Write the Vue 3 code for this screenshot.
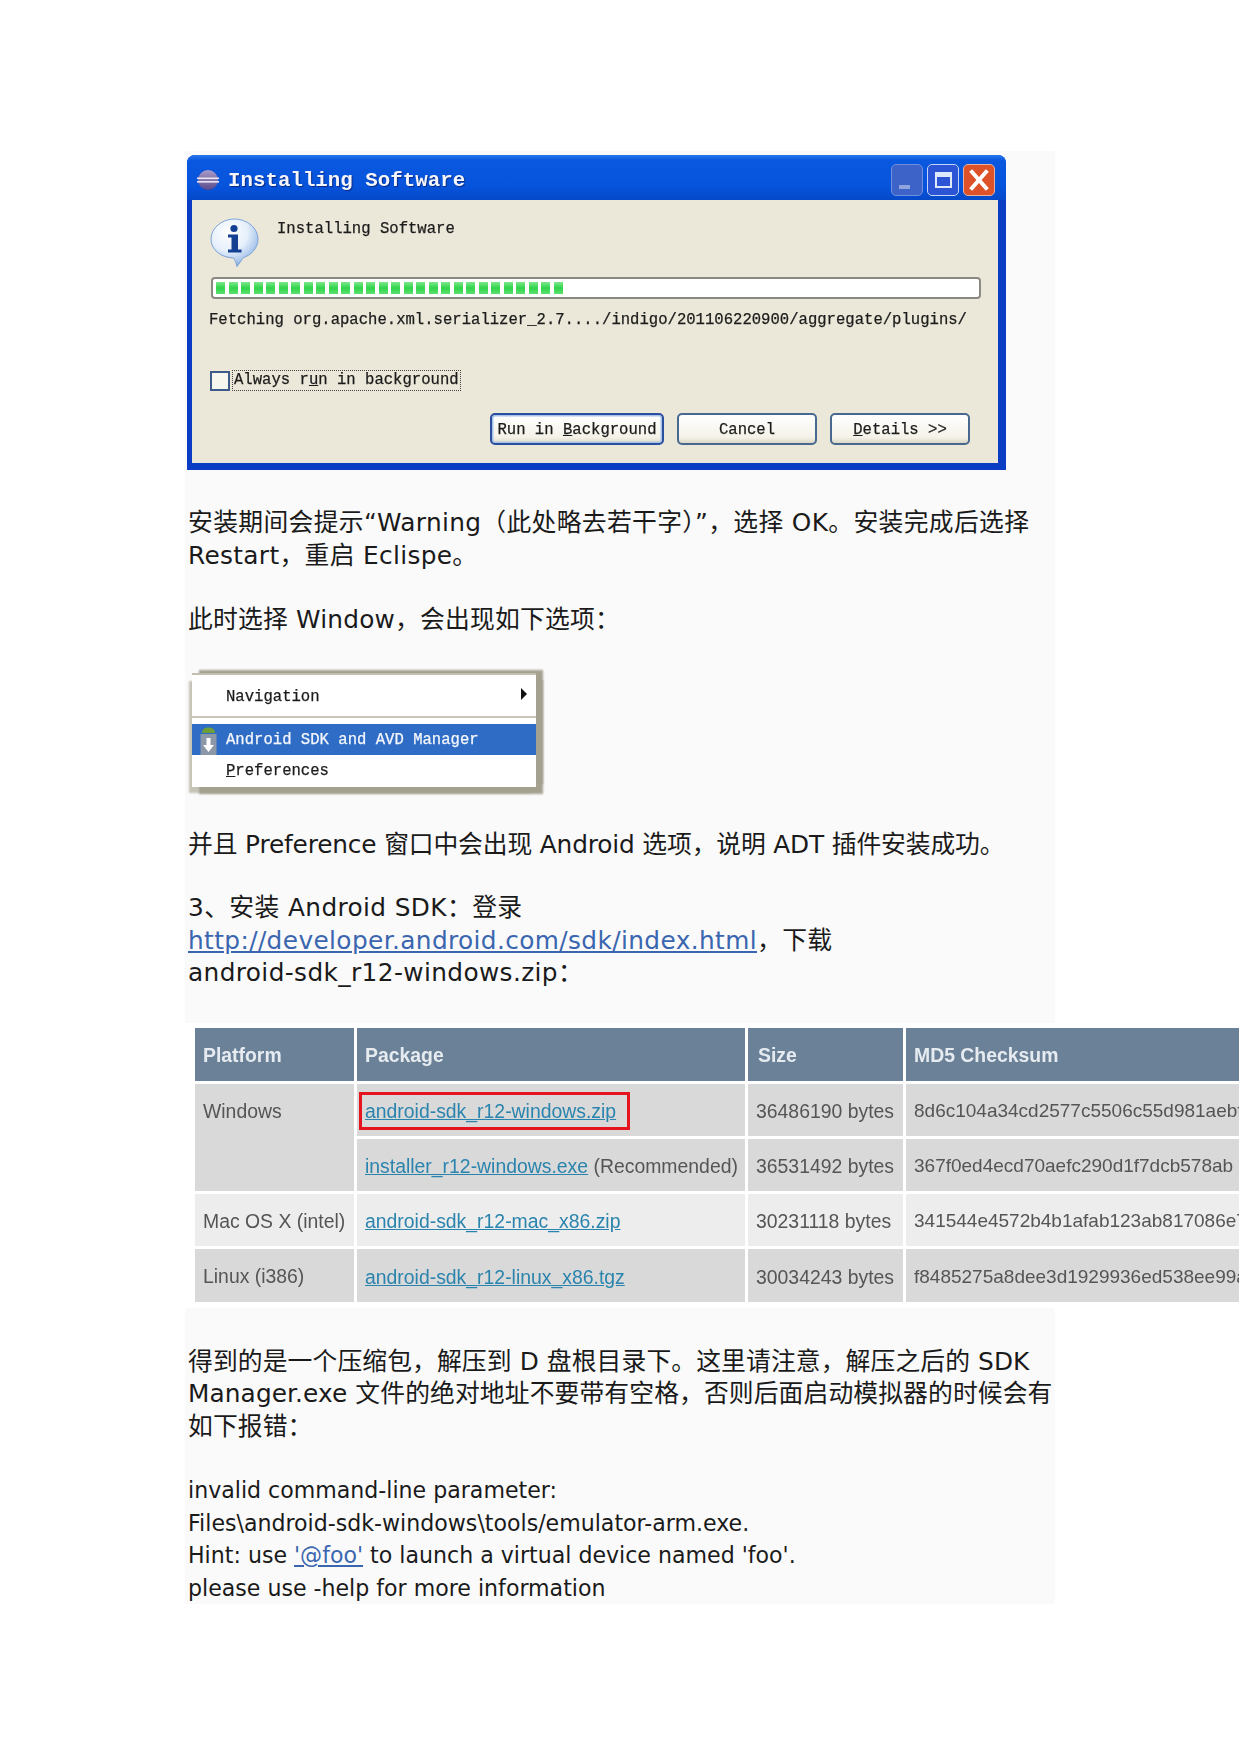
<script setup>
const segments = Array.from({ length: 28 }, (_, i) => i)
const rows = [
  { platform: 'Windows', span: 2, link: 'android-sdk_r12-windows.zip', size: '36486190 bytes', md5: '8d6c104a34cd2577c5506c55d981aebf', boxed: true, tone: 'dark' },
  { link: 'installer_r12-windows.exe', note: ' (Recommended)', size: '36531492 bytes', md5: '367f0ed4ecd70aefc290d1f7dcb578ab', tone: 'dark' },
  { platform: 'Mac OS X (intel)', span: 1, link: 'android-sdk_r12-mac_x86.zip', size: '30231118 bytes', md5: '341544e4572b4b1afab123ab817086e7', tone: 'light' },
  { platform: 'Linux (i386)', span: 1, link: 'android-sdk_r12-linux_x86.tgz', size: '30034243 bytes', md5: 'f8485275a8dee3d1929936ed538ee99a', tone: 'dark' }
]
</script>

<template>
  <div class="page">
    <main class="doc">
      <section class="dialog">
        <header class="titlebar">
          <svg class="eclipse" viewBox="0 0 22 20" width="22" height="20">
            <defs>
              <linearGradient id="ecl" x1="0" y1="0" x2="0" y2="1">
                <stop offset="0" stop-color="#a99bc8" />
                <stop offset="1" stop-color="#5b4a8c" />
              </linearGradient>
            </defs>
            <circle cx="11" cy="10" r="10" fill="url(#ecl)" />
            <rect x="0" y="7.5" width="22" height="1.6" fill="#e8e6f2" />
            <rect x="0" y="11" width="22" height="1.6" fill="#e8e6f2" />
          </svg>
          <span class="title">Installing Software</span>
          <div class="winbtns">
            <div class="winbtn min"><i class="dash"></i></div>
            <div class="winbtn max"><i class="frame"></i></div>
            <div class="winbtn close">
              <svg viewBox="0 0 30 30" width="30" height="30">
                <path d="M8 7 L22 23 M22 7 L8 23" stroke="#fff" stroke-width="4" stroke-linecap="square" fill="none" />
              </svg>
            </div>
          </div>
        </header>
        <div class="client">
          <div class="head">
            <svg class="info" viewBox="0 0 49 49" width="49" height="49">
              <defs>
                <radialGradient id="bub" cx="0.38" cy="0.28" r="0.8">
                  <stop offset="0" stop-color="#ffffff" />
                  <stop offset="0.5" stop-color="#e6effb" />
                  <stop offset="0.8" stop-color="#a9c6ec" />
                  <stop offset="1" stop-color="#4f82c8" />
                </radialGradient>
              </defs>
              <path d="M24.5 1 C37 1 48 10 48 21 C48 31 40 37.5 33.5 39.5 C31.5 42 29 46 27 48.5 C26 44.5 25 42 23.5 40 C11 39.5 1 32 1 21 C1 10 12 1 24.5 1 Z" fill="url(#bub)" stroke="#7ea3d8" stroke-width="1" />
              <circle cx="24" cy="10.5" r="3.6" fill="#133f92" />
              <path d="M18 16.5 H28 V31.5 H31.5 V34.5 H18 V31.5 H21.5 V19.5 H18 Z" fill="#133f92" />
            </svg>
            <span class="mono heading">Installing Software</span>
          </div>
          <div class="progress">
            <i v-for="s in segments" :key="s" class="seg"></i>
          </div>
          <div class="mono fetch">Fetching org.apache.xml.serializer_2.7..../indigo/201106220900/aggregate/plugins/</div>
          <div class="check">
            <span class="box"></span>
            <span class="mono label">Always r<u>u</u>n in background</span>
          </div>
          <div class="buttons">
            <button class="mono btn primary">Run in <u>B</u>ackground</button>
            <button class="mono btn">Cancel</button>
            <button class="mono btn"><u>D</u>etails &gt;&gt;</button>
          </div>
        </div>
      </section>

      <p class="p1">安装期间会提示“Warning（此处略去若干字）”，选择 OK。安装完成后选择<br />Restart，重启 Eclispe。</p>
      <p class="p2">此时选择 Window，会出现如下选项：</p>

      <section class="menu">
        <div class="panel">
          <div class="mono mrow nav">Navigation<i class="arrow"></i></div>
          <div class="sep"></div>
          <div class="mono mrow active">
            <svg class="droid" viewBox="0 0 17 28" width="17" height="28">
              <path d="M2 6 C2 2 5 0.5 8.5 0.5 C12 0.5 15 2 15 6 Z" fill="#6f9e3a" />
              <rect x="0.5" y="7" width="16" height="21" fill="#8c98a8" />
              <path d="M6.5 11 H10.5 V18 H14 L8.5 25 L3 18 H6.5 Z" fill="#fff" />
            </svg>
            Android SDK and AVD Manager
          </div>
          <div class="mono mrow pref"><u>P</u>references</div>
        </div>
      </section>

      <p class="p3">并且 Preference 窗口中会出现 Android 选项，说明 ADT 插件安装成功。</p>
      <p class="p4">3、安装 Android SDK：登录<br /><a class="url">http://developer.android.com/sdk/index.html</a>，下载<br />android-sdk_r12-windows.zip：</p>

      <section class="tablewrap">
        <table class="sdk">
          <colgroup>
            <col class="c1" /><col class="c2" /><col class="c3" /><col class="c4" />
          </colgroup>
          <thead>
            <tr>
              <th>Platform</th><th>Package</th><th class="sizeh">Size</th><th>MD5 Checksum</th>
            </tr>
          </thead>
          <tbody>
            <tr v-for="r in rows" :key="r.link" :class="r.tone">
              <td v-if="r.platform" :rowspan="r.span" class="plat">{{ r.platform }}</td>
              <td class="pkg">
                <span :class="{ boxed: r.boxed }"><a class="dl">{{ r.link }}</a></span>{{ r.note }}
              </td>
              <td class="size">{{ r.size }}</td>
              <td class="md5">{{ r.md5 }}</td>
            </tr>
          </tbody>
        </table>
      </section>

      <p class="p5">得到的是一个压缩包，解压到 D 盘根目录下。这里请注意，解压之后的 SDK<br />Manager.exe 文件的绝对地址不要带有空格，否则后面启动模拟器的时候会有<br />如下报错：</p>
      <p class="p6">invalid command-line parameter:<br />Files\android-sdk-windows\tools/emulator-arm.exe.<br />Hint: use <a class="url">'@foo'</a> to launch a virtual device named 'foo'.<br />please use -help for more information</p>
    </main>
  </div>
</template>

<style scoped>
.page {
  width: 1241px;
  height: 1754px;
  padding-top: 151px;
  padding-left: 185px;
  box-sizing: border-box;
  background: #fff;
  overflow: hidden;
}
.doc {
  width: 870px;
  height: 1453px;
  padding-top: 4px;
  box-sizing: border-box;
  background: #fafafa;
  color: #1a1a1a;
  font-family: "DejaVu Sans", "Noto Sans CJK SC", sans-serif;
  font-size: 24.8px;
  letter-spacing: 0.2px;
  line-height: 32.5px;
}
p {
  margin: 0;
  padding-left: 3px;
  white-space: nowrap;
}
.p1 { margin-top: 37px; letter-spacing: 0.33px; }
.p2 { margin-top: 32px; }
.p3 { margin-top: 36px; letter-spacing: -0.15px; }
.p4 { margin-top: 31px; letter-spacing: 0.38px; }
.p5 { margin-top: 38px; letter-spacing: 0.1px; }
.p6 {
  margin-top: 31px;
  font-size: 22.1px;
  letter-spacing: 0;
}
.url {
  color: #3a66b0;
  text-decoration: underline;
}
.mono {
  font-family: "Liberation Mono", "DejaVu Sans Mono", monospace;
  font-size: 15.6px;
  letter-spacing: 0;
  color: #1c1c1c;
  -webkit-text-stroke: 0.25px #1c1c1c;
}

/* dialog */
.dialog {
  width: 819px;
  height: 315px;
  margin-left: 2px;
  display: flex;
  flex-direction: column;
  background: #0a3cc4;
  border-radius: 8px 8px 0 0;
  filter: blur(0.35px);
}
.titlebar {
  height: 45px;
  flex: none;
  box-sizing: border-box;
  display: flex;
  align-items: center;
  padding: 4px 0 0 10px;
  border-radius: 8px 8px 0 0;
  background: linear-gradient(#2a78ea 0, #0a58e0 12%, #0653dc 70%, #0549c8 100%);
}
.eclipse {
  flex: none;
}
.title {
  margin-left: 9px;
  padding-top: 2px;
  font-family: "Liberation Mono", monospace;
  font-weight: 700;
  font-size: 20.8px;
  letter-spacing: 0;
  line-height: 28px;
  color: #f4f6fb;
  text-shadow: 1px 1px 1px #0a2a80;
}
.winbtns {
  margin-left: auto;
  margin-right: 11px;
  display: flex;
  gap: 4px;
}
.winbtn {
  width: 32px;
  height: 32px;
  box-sizing: border-box;
  border: 1.5px solid #9db7ee;
  border-radius: 5px;
  position: relative;
  display: flex;
  align-items: center;
  justify-content: center;
}
.winbtn.min {
  background: #3d63c8;
  border-color: #6f8fdc;
}
.dash {
  position: absolute;
  left: 7px;
  bottom: 6px;
  width: 11px;
  height: 4px;
  background: #8fa4dc;
}
.winbtn.max {
  background: #2b55d4;
  border-color: #c4d4f6;
}
.frame {
  width: 17px;
  height: 16px;
  box-sizing: border-box;
  border: 2px solid #dfe8fb;
  border-top-width: 5px;
}
.winbtn.close {
  background: #dd5228;
  border-color: #e7b3a0;
}
.client {
  flex: 1;
  margin: 0 8px 7px 5px;
  padding: 18px 0 0 19px;
  background: #ebe8d9;
  box-sizing: border-box;
}
.head {
  display: flex;
  height: 49px;
}
.info {
  flex: none;
  margin-left: -1px;
}
.heading {
  margin-left: 18px;
  padding-top: 1px;
  line-height: 20px;
}
.progress {
  width: 770px;
  height: 22px;
  margin-top: 10px;
  box-sizing: border-box;
  border: 2px solid #8b8a80;
  border-radius: 4px;
  background: #fff;
  padding: 3px 3px;
  display: flex;
  gap: 3.5px;
}
.seg {
  width: 9px;
  flex: none;
  background: linear-gradient(#7fe88e, #2fd44a 50%, #5ee070);
}
.fetch {
  margin-top: 11px;
  line-height: 20px;
  margin-left: -2px;
  white-space: nowrap;
}
.check {
  margin-top: 40px;
  height: 21px;
  display: flex;
  align-items: center;
}
.box {
  width: 20px;
  height: 20px;
  margin-left: -1px;
  box-sizing: border-box;
  border: 2px solid #3d5a8a;
  background: #f6f5ee;
}
.label {
  margin-left: 2px;
  padding: 0 1px;
  line-height: 19px;
  border: 1px dotted #444;
}
.buttons {
  margin-top: 22px;
  padding-right: 28px;
  display: flex;
  justify-content: flex-end;
  gap: 13px;
}
.btn {
  width: 140px;
  height: 32px;
  padding: 2px 0 0;
  box-sizing: border-box;
  border: 2px solid #47688f;
  border-radius: 5px;
  background: linear-gradient(#fff, #f4f2e8 80%, #dcd8c6);
  text-align: center;
}
.btn.primary {
  width: 174px;
  border-color: #2a4f9e;
  box-shadow: inset 0 0 0 1.5px #a9c4ea;
}

/* menu */
.menu {
  width: 357px;
  height: 124px;
  margin: 32px 0 0 3px;
  padding: 4px 0 0 4px;
  box-sizing: border-box;
  filter: blur(0.35px);
}
.panel {
  width: 344px;
  height: 112px;
  background: #fff;
  border-top: 2px solid #c2bfb0;
  box-shadow: 7px 7px 2px #a4a191, 7px -3px 2px #a4a191, -4px 7px 2px -1px #c5c3b6;
}
.mrow {
  display: flex;
  align-items: center;
  padding-left: 34px;
  position: relative;
}
.nav {
  height: 41px;
  padding-top: 4px;
  box-sizing: border-box;
}
.arrow {
  position: absolute;
  left: 329px;
  top: 13px;
  width: 0;
  height: 0;
  border-left: 6px solid #111;
  border-top: 6px solid transparent;
  border-bottom: 6px solid transparent;
}
.sep {
  height: 2px;
  margin-bottom: 6px;
  background: #c9c6b8;
}
.active {
  height: 31px;
  padding-top: 3px;
  box-sizing: border-box;
  background: #2f6cc5;
  color: #f4f7fc;
  -webkit-text-stroke: 0.25px #f4f7fc;
}
.droid {
  position: absolute;
  left: 8px;
  top: 3px;
}
.pref {
  height: 31px;
  padding-top: 3px;
  box-sizing: border-box;
}

/* table */
.tablewrap {
  width: 1054px;
  height: 285px;
  margin: 33px 0 0 0;
  padding: 2px 0 0 7px;
  box-sizing: border-box;
  background: #fff;
  overflow: hidden;
  filter: blur(0.3px);
}
.sdk {
  width: 1051px;
  table-layout: fixed;
  border-collapse: separate;
  border-spacing: 3px;
  font-family: "Liberation Sans", Arial, sans-serif;
  font-size: 19.4px;
  letter-spacing: 0;
  line-height: 24px;
  color: #555;
}
.c1 { width: 159px; }
.c2 { width: 388px; }
.c3 { width: 155px; }
.c4 { width: 334px; }
th {
  height: 53px;
  padding: 2px 8px 0;
  box-sizing: border-box;
  background: #6b8198;
  color: #e6ebf0;
  font-weight: 700;
  text-align: left;
  white-space: nowrap;
  overflow: hidden;
}
th.sizeh {
  padding-left: 10px;
}
td {
  height: 52.3px;
  padding: 2px 8px 0;
  box-sizing: border-box;
  white-space: nowrap;
  overflow: hidden;
  vertical-align: middle;
}
.dark td { background: #d9d9d9; }
.light td { background: #ededed; }
.plat { vertical-align: top; padding-top: 15px; }
.md5 { font-size: 19px; }
.boxed {
  display: inline-block;
  margin-left: -6px;
  padding: 4px 11px 4px 3px;
  border: 3px solid #e5141e;
  line-height: 24px;
}
.dl {
  color: #2a84ad;
  text-decoration: underline;
}
</style>

<style>
html, body {
  margin: 0;
  background: #fff;
  overflow: hidden;
}
</style>
